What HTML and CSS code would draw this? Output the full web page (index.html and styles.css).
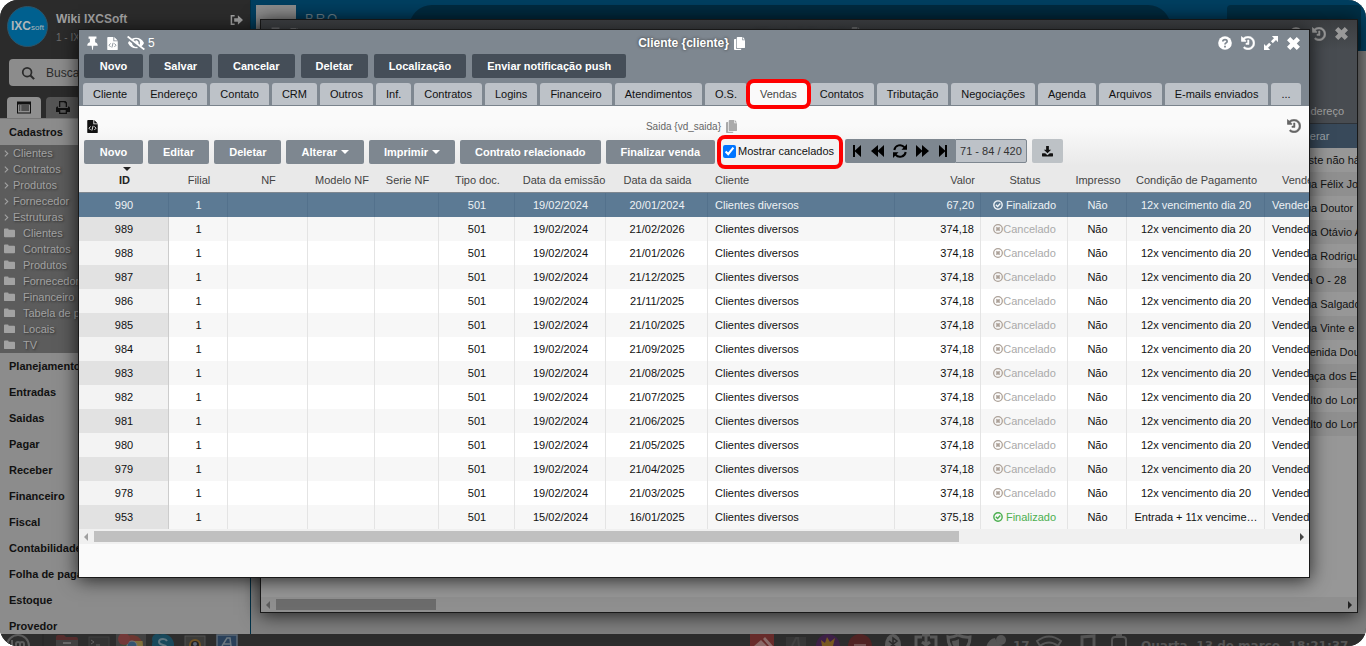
FILE: index.html
```html
<!DOCTYPE html>
<html lang="pt-BR">
<head>
<meta charset="utf-8">
<title>Cliente - Vendas</title>
<link rel="stylesheet" href="styles.css">
</head>
<body>
<svg class="sprite" aria-hidden="true">
  <symbol id="pin" viewBox="0 0 12 16"><path d="M1.500.5h9v2.500H9v4.200c2 .8 3 2 3 3.800H7L6.300 16h-.6L5 11H0c0-1.800 1-3 3-3.800V3H1.500z"/></symbol>
  <symbol id="code" viewBox="0 0 12 16"><path d="M1 1h6v5h5v9a1 1 0 0 1-1 1H1a1 1 0 0 1-1-1V2a1 1 0 0 1 1-1zM8 1l4 4H8z"/><path class="cut" d="M3.800 8.500 2 10.500l1.800 2M8.200 8.500l1.800 2-1.800 2M6.700 7.800 5.300 13.200"/></symbol>
  <symbol id="eye" viewBox="0 0 640 512"><path d="M320 400c-75.850 0-137.250-58.710-142.900-133.110L72.200 185.820c-13.790 17.300-26.480 35.590-36.720 55.590a32.350 32.350 0 0 0 0 29.190C89.710 376.410 197.070 448 320 448c26.910 0 52.870-4 77.890-10.460L346 397.390a144.130 144.130 0 0 1-26 2.610zm313.820 58.100l-110.550-85.440a331.250 331.250 0 0 0 81.250-102.070 32.350 32.350 0 0 0 0-29.190C550.290 135.590 442.930 64 320 64a308.150 308.150 0 0 0-147.320 37.700L45.460 3.370A16 16 0 0 0 23 6.180L3.370 31.450A16 16 0 0 0 6.180 53.900l588.360 454.730a16 16 0 0 0 22.460-2.810l19.640-25.270a16 16 0 0 0-2.820-22.450zm-183.720-142l-39.300-30.380A94.750 94.750 0 0 0 416 256a94.760 94.760 0 0 0-121.310-92.210A47.650 47.650 0 0 1 304 192a46.640 46.640 0 0 1-1.540 10l-73.610-56.890A142.310 142.310 0 0 1 320 112a143.920 143.920 0 0 1 144 144c0 21.630-5.290 41.790-13.900 60.110z"/></symbol>
  <symbol id="history" viewBox="0 0 512 512"><path stroke="currentColor" stroke-width="18" d="M504 255.531c.253 136.640-111.180 248.372-247.820 248.468-59.015.042-113.223-20.530-155.822-54.911-11.077-8.940-11.905-25.541-1.839-35.607l11.267-11.267c8.609-8.609 22.353-9.551 31.891-1.984C173.062 425.135 212.781 440 256 440c101.705 0 184-82.311 184-184 0-101.705-82.311-184-184-184-48.814 0-93.149 18.969-126.068 49.932l50.754 50.754c10.080 10.080 2.941 27.314-11.313 27.314H24c-8.837 0-16-7.163-16-16V38.627c0-14.254 17.234-21.393 27.314-11.314l49.372 49.372C129.209 34.136 189.552 8 256 8c136.810 0 247.747 110.780 248 247.531zM240 144h52v164h-112v-48h60z"/></symbol>
  <symbol id="help" viewBox="0 0 16 16"><circle cx="8" cy="8" r="7.800"/><path class="cut thick" d="M5.500 6.300C5.700 3.300 10.500 3.400 10.400 6.200 10.300 8 8 7.800 8 9.800M8 11v2"/></symbol>
  <symbol id="expand" viewBox="0 0 16 16"><path d="M9 0h7v7l-2.300-2.300-3.600 3.600-2.200-2.200 3.500-3.500zM0 9l2.300 2.300 3.600-3.600 2.200 2.200-3.500 3.500L7 16H0z"/></symbol>
  <symbol id="close" viewBox="0 0 14 14"><path d="M3.500 0 7 3.500 10.500 0 14 3.500 10.500 7l3.500 3.500-3.500 3.500L7 10.500 3.500 14 0 10.500 3.500 7 0 3.500z"/></symbol>
  <symbol id="copy" viewBox="0 0 12 14"><path d="M4 0h5v3.500h3V11a1 1 0 0 1-1 1H4a1 1 0 0 1-1-1V1a1 1 0 0 1 1-1zM9.700 0 12 2.700H9.700zM0 3a1 1 0 0 1 1-1h1.300v10.700H8V13a1 1 0 0 1-1 1H1a1 1 0 0 1-1-1z"/></symbol>
  <symbol id="search" viewBox="0 0 16 16"><g fill="none" stroke="currentColor" stroke-width="2"><circle cx="7" cy="7" r="5"/><path d="M10.500 10.500 15 15" stroke-width="2.400"/></g></symbol>
  <symbol id="exit" viewBox="0 0 14 12"><path d="M5 1.500H1.500v9H5" fill="none" stroke="currentColor" stroke-width="1.600"/><path d="M4.500 4.200h4V1L14 6l-5.500 5V7.800h-4z"/></symbol>
  <symbol id="list" viewBox="0 0 14 12"><path d="M0 0h14v12H0zM1 3v8h12V3z" fill-rule="evenodd"/><path d="M2 4h1.300v1H2zm2.300 0H12v1H4.300zM2 6h1.300v1H2zm2.300 0H12v1H4.300zM2 8h1.300v1H2zm2.300 0H12v1H4.300z"/></symbol>
  <symbol id="print" viewBox="0 0 14 13"><path d="M3 0h6.500L11 1.500V6H9.700V2.300H8.500V1.300H4.300V6H3zM1.500 5.500H2V7h10V5.500h.5A1.500 1.500 0 0 1 14 7v4h-3v2H3v-2H0V7a1.500 1.500 0 0 1 1.500-1.500zM4.300 9v2.700h5.400V9z" fill-rule="evenodd"/></symbol>
  <symbol id="folder" viewBox="0 0 12 10"><path d="M0 1a1 1 0 0 1 1-1h3a1 1 0 0 1 1 1v.5h6a1 1 0 0 1 1 1V8.500a1 1 0 0 1-1 1H1a1 1 0 0 1-1-1z"/></symbol>
  <symbol id="chev" viewBox="0 0 6 8"><path d="M1 .5 4.500 4 1 7.500" fill="none" stroke="currentColor" stroke-width="1.300"/></symbol>
  <symbol id="first" viewBox="0 0 10 12"><path d="M1 0h2v5.500L9 0v12L3 6.500V12H1z"/></symbol>
  <symbol id="back" viewBox="0 0 13 12"><path d="M7 0v5.500L13 0v12L7 6.500V12L0 6z"/></symbol>
  <symbol id="fwd" viewBox="0 0 13 12"><path d="M0 0l6 5.500V0l7 6-7 6V6.500L0 12z"/></symbol>
  <symbol id="last" viewBox="0 0 10 12"><path d="M9 0H7v5.500L1 0v12l6-5.500V12h2z"/></symbol>
  <symbol id="refresh" viewBox="0 0 14 14"><path d="M1.300 6A5.800 5.800 0 0 1 11.500 3.300M12.700 8A5.800 5.800 0 0 1 2.500 10.700" fill="none" stroke="currentColor" stroke-width="2"/><path d="M14 0v5.700H8.500zM0 14V8.300h5.500z"/></symbol>
  <symbol id="down" viewBox="0 0 12 12"><path d="M4.500 0h3v4H10L6 8 2 4h2.500zM.5 8h3L6 10.200 8.500 8h3A.5.5 0 0 1 12 8.500V11a.5.5 0 0 1-.5.500H.5A.5.5 0 0 1 0 11V8.500A.5.5 0 0 1 .5 8z"/></symbol>
  <symbol id="ok" viewBox="0 0 12 12"><g fill="none" stroke="currentColor" stroke-width="1.700"><circle cx="6" cy="6" r="5"/><path d="M3.500 5.700 5.500 7.700 8.800 4.300"/></g></symbol>
  <symbol id="no" viewBox="0 0 12 12"><g fill="none" stroke="currentColor" stroke-width="1.500"><circle cx="6" cy="6" r="5.200"/><path d="M4 4l4 4M8 4l-4 4" stroke-width="2"/></g></symbol>
</svg>

<div class="screen">
  <div class="app">
    <aside class="side">
      <header class="user">
        <div class="logo"><b>IXC</b>soft</div>
        <div class="who"><strong>Wiki IXCSoft</strong><span>1 - IXC</span></div>
        <svg class="exit"><use href="#exit"/></svg>
      </header>
      <div class="find"><svg><use href="#search"/></svg><input type="text" aria-label="Buscar" value="Buscar"></div>
      <div class="sidetabs">
        <button class="on" aria-label="Menu"><svg><use href="#list"/></svg></button>
        <button aria-label="Imprimir"><svg><use href="#print"/></svg></button>
      </div>
      <h2 class="group">Cadastros</h2>
      <ul class="tree">
        <li><svg class="chev"><use href="#chev"/></svg>Clientes</li>
        <li><svg class="chev"><use href="#chev"/></svg>Contratos</li>
        <li><svg class="chev"><use href="#chev"/></svg>Produtos</li>
        <li><svg class="chev"><use href="#chev"/></svg>Fornecedor</li>
        <li><svg class="chev"><use href="#chev"/></svg>Estruturas</li>
        <li><svg class="folder"><use href="#folder"/></svg>Clientes</li>
        <li><svg class="folder"><use href="#folder"/></svg>Contratos</li>
        <li><svg class="folder"><use href="#folder"/></svg>Produtos</li>
        <li><svg class="folder"><use href="#folder"/></svg>Fornecedor</li>
        <li><svg class="folder"><use href="#folder"/></svg>Financeiro</li>
        <li><svg class="folder"><use href="#folder"/></svg>Tabela de preço</li>
        <li><svg class="folder"><use href="#folder"/></svg>Locais</li>
        <li><svg class="folder"><use href="#folder"/></svg>TV</li>
      </ul>
      <h2 class="group">Planejamento</h2>
      <h2 class="group">Entradas</h2>
      <h2 class="group">Saidas</h2>
      <h2 class="group">Pagar</h2>
      <h2 class="group">Receber</h2>
      <h2 class="group">Financeiro</h2>
      <h2 class="group">Fiscal</h2>
      <h2 class="group">Contabilidade</h2>
      <h2 class="group">Folha de pagamento</h2>
      <h2 class="group">Estoque</h2>
      <h2 class="group">Provedor</h2>
    </aside>
    <main class="main">
      <div class="topbar">
        <div class="tile"></div><span class="brand">BRO —</span><div class="pill"></div><div class="box"></div>
      </div>
    </main>
  </div>

  <section class="win behind">
    <div class="bar">
      <div class="left"><svg class="pin"><use href="#pin"/></svg><svg class="code"><use href="#code"/></svg></div>
      <h1 class="title">Cliente {cliente}<svg class="copy"><use href="#copy"/></svg></h1>
      <div class="right"><svg class="i14"><use href="#help"/></svg><svg class="i14"><use href="#history"/></svg><svg class="x"><use href="#close"/></svg></div>
    </div>
    <ul class="streets">
      <li class="label">Endereço</li>
      <li class="sel">Alterar</li>
      <li>Teste não há</li>
      <li>Rua Félix João</li>
      <li>Rua Doutor</li>
      <li>Rua Otávio A</li>
      <li>Rua Rodrigues</li>
      <li>Via O - 28</li>
      <li>Rua Salgado</li>
      <li>Rua Vinte e</li>
      <li>Avenida Doutor</li>
      <li>Praça dos E</li>
      <li>Salto do Lontra</li>
      <li>Salto do Lontra</li>
    </ul>
    <div class="scroll dark"><i class="la"></i><div class="track"><div class="thumb"></div></div><i class="ra"></i></div>
  </section>

  <section class="win front">
    <div class="head">
      <div class="bar">
        <div class="left"><svg class="pin"><use href="#pin"/></svg><svg class="code"><use href="#code"/></svg><svg class="eye"><use href="#eye"/></svg><span>5</span></div>
        <h1 class="title">Cliente {cliente}<svg class="copy"><use href="#copy"/></svg></h1>
        <div class="right"><svg class="i14"><use href="#help"/></svg><svg class="i14"><use href="#history"/></svg><svg class="i14"><use href="#expand"/></svg><svg class="x"><use href="#close"/></svg></div>
      </div>
      <div class="actions">
        <button>Novo</button><button>Salvar</button><button>Cancelar</button><button>Deletar</button><button>Localização</button><button>Enviar notificação push</button>
      </div>
      <nav class="tabs">
        <button>Cliente</button><button>Endereço</button><button>Contato</button><button>CRM</button><button>Outros</button><button>Inf.</button><button>Contratos</button><button>Logins</button><button>Financeiro</button><button>Atendimentos</button><button>O.S.</button><button class="on mark">Vendas</button><button>Contatos</button><button>Tributação</button><button>Negociações</button><button>Agenda</button><button>Arquivos</button><button>E-mails enviados</button><button>...</button>
      </nav>
    </div>
    <div class="panel">
      <div class="sub">
        <svg class="code"><use href="#code"/></svg>
        <span class="subtitle">Saida {vd_saida}<svg class="copy"><use href="#copy"/></svg></span>
        <svg class="i14"><use href="#history"/></svg>
      </div>
      <div class="tools">
        <button>Novo</button><button>Editar</button><button>Deletar</button><button>Alterar<i class="caret"></i></button><button>Imprimir<i class="caret"></i></button><button>Contrato relacionado</button><button>Finalizar venda</button>
        <label class="check mark"><input type="checkbox" checked>Mostrar cancelados</label>
        <div class="pager">
          <div class="nav">
            <button aria-label="Primeira"><svg class="n10"><use href="#first"/></svg></button>
            <button aria-label="Anterior"><svg class="n13"><use href="#back"/></svg></button>
            <button aria-label="Atualizar"><svg class="n14"><use href="#refresh"/></svg></button>
            <button aria-label="Próxima"><svg class="n13"><use href="#fwd"/></svg></button>
            <button aria-label="Última"><svg class="n10"><use href="#last"/></svg></button>
          </div>
          <span class="count">71 - 84 / 420</span>
        </div>
        <button class="dl" aria-label="Baixar"><svg><use href="#down"/></svg></button>
      </div>
    </div>
    <div class="grid">
      <table>
        <colgroup><col class="w90"><col class="w59"><col class="w80"><col class="w67"><col class="w64"><col class="w76"><col class="w91"><col class="w102"><col class="w187"><col class="w86"><col class="w87"><col class="w59"><col class="w138"><col class="w80"></colgroup>
        <thead><tr><th class="sorted">ID</th><th>Filial</th><th>NF</th><th>Modelo NF</th><th>Serie NF</th><th>Tipo doc.</th><th>Data da emissão</th><th>Data da saida</th><th>Cliente</th><th>Valor</th><th>Status</th><th>Impresso</th><th>Condição de Pagamento</th><th>Vendedor</th></tr></thead>
        <tbody>
          <tr class="sel"><td>990</td><td>1</td><td></td><td></td><td></td><td>501</td><td>19/02/2024</td><td>20/01/2024</td><td>Clientes diversos</td><td>67,20</td><td class="ok"><svg><use href="#ok"/></svg> Finalizado</td><td>Não</td><td>12x vencimento dia 20</td><td>Vendedor</td></tr>
          <tr><td>989</td><td>1</td><td></td><td></td><td></td><td>501</td><td>19/02/2024</td><td>21/02/2026</td><td>Clientes diversos</td><td>374,18</td><td class="no"><svg><use href="#no"/></svg>Cancelado</td><td>Não</td><td>12x vencimento dia 20</td><td>Vendedor</td></tr>
          <tr><td>988</td><td>1</td><td></td><td></td><td></td><td>501</td><td>19/02/2024</td><td>21/01/2026</td><td>Clientes diversos</td><td>374,18</td><td class="no"><svg><use href="#no"/></svg>Cancelado</td><td>Não</td><td>12x vencimento dia 20</td><td>Vendedor</td></tr>
          <tr><td>987</td><td>1</td><td></td><td></td><td></td><td>501</td><td>19/02/2024</td><td>21/12/2025</td><td>Clientes diversos</td><td>374,18</td><td class="no"><svg><use href="#no"/></svg>Cancelado</td><td>Não</td><td>12x vencimento dia 20</td><td>Vendedor</td></tr>
          <tr><td>986</td><td>1</td><td></td><td></td><td></td><td>501</td><td>19/02/2024</td><td>21/11/2025</td><td>Clientes diversos</td><td>374,18</td><td class="no"><svg><use href="#no"/></svg>Cancelado</td><td>Não</td><td>12x vencimento dia 20</td><td>Vendedor</td></tr>
          <tr><td>985</td><td>1</td><td></td><td></td><td></td><td>501</td><td>19/02/2024</td><td>21/10/2025</td><td>Clientes diversos</td><td>374,18</td><td class="no"><svg><use href="#no"/></svg>Cancelado</td><td>Não</td><td>12x vencimento dia 20</td><td>Vendedor</td></tr>
          <tr><td>984</td><td>1</td><td></td><td></td><td></td><td>501</td><td>19/02/2024</td><td>21/09/2025</td><td>Clientes diversos</td><td>374,18</td><td class="no"><svg><use href="#no"/></svg>Cancelado</td><td>Não</td><td>12x vencimento dia 20</td><td>Vendedor</td></tr>
          <tr><td>983</td><td>1</td><td></td><td></td><td></td><td>501</td><td>19/02/2024</td><td>21/08/2025</td><td>Clientes diversos</td><td>374,18</td><td class="no"><svg><use href="#no"/></svg>Cancelado</td><td>Não</td><td>12x vencimento dia 20</td><td>Vendedor</td></tr>
          <tr><td>982</td><td>1</td><td></td><td></td><td></td><td>501</td><td>19/02/2024</td><td>21/07/2025</td><td>Clientes diversos</td><td>374,18</td><td class="no"><svg><use href="#no"/></svg>Cancelado</td><td>Não</td><td>12x vencimento dia 20</td><td>Vendedor</td></tr>
          <tr><td>981</td><td>1</td><td></td><td></td><td></td><td>501</td><td>19/02/2024</td><td>21/06/2025</td><td>Clientes diversos</td><td>374,18</td><td class="no"><svg><use href="#no"/></svg>Cancelado</td><td>Não</td><td>12x vencimento dia 20</td><td>Vendedor</td></tr>
          <tr><td>980</td><td>1</td><td></td><td></td><td></td><td>501</td><td>19/02/2024</td><td>21/05/2025</td><td>Clientes diversos</td><td>374,18</td><td class="no"><svg><use href="#no"/></svg>Cancelado</td><td>Não</td><td>12x vencimento dia 20</td><td>Vendedor</td></tr>
          <tr><td>979</td><td>1</td><td></td><td></td><td></td><td>501</td><td>19/02/2024</td><td>21/04/2025</td><td>Clientes diversos</td><td>374,18</td><td class="no"><svg><use href="#no"/></svg>Cancelado</td><td>Não</td><td>12x vencimento dia 20</td><td>Vendedor</td></tr>
          <tr><td>978</td><td>1</td><td></td><td></td><td></td><td>501</td><td>19/02/2024</td><td>21/03/2025</td><td>Clientes diversos</td><td>374,18</td><td class="no"><svg><use href="#no"/></svg>Cancelado</td><td>Não</td><td>12x vencimento dia 20</td><td>Vendedor</td></tr>
          <tr><td>953</td><td>1</td><td></td><td></td><td></td><td>501</td><td>15/02/2024</td><td>16/01/2025</td><td>Clientes diversos</td><td>375,18</td><td class="ok"><svg><use href="#ok"/></svg> Finalizado</td><td>Não</td><td>Entrada + 11x vencime…</td><td>Vendedor</td></tr>
        </tbody>
      </table>
    </div>
    <div class="scroll"><i class="la"></i><div class="track"><div class="thumb"></div></div><i class="ra"></i></div>
  </section>

  <footer class="taskbar">
    <svg class="apps" viewBox="0 0 240 12">
      <circle cx="18" cy="12" r="11" fill="#2d2d2d" stroke="#5c5c5c" stroke-width="2"/>
      <path d="M12 6v9h4M16 15v-5q0-2 2-2t2 2v5M20 10q0-2 2-2t2 2v5" fill="none" stroke="#5c5c5c" stroke-width="2"/>
      <path d="M43 0v12" stroke="#262626"/>
      <path d="M56 3q0-2 2-2h6l2 2h10q2 0 2 2v7H56z" fill="#542c2c"/><path d="M56 6h22v6H56z" fill="#414141"/><path d="M63 8h8v2h-8z" fill="#686868"/>
      <rect x="89" y="3" width="20" height="14" fill="#333" stroke="#414141"/><path d="M91 6l3 2-3 2M96 11h4" fill="none" stroke="#606060"/>
      <rect x="116" width="30" height="12" fill="#414141"/><circle cx="132" cy="12" r="11" fill="#3c4c3a"/><path d="M122.500 6.500A11 11 0 0 1 143 11h-11z" fill="#6d3630"/><path d="M134 7h8.500l.5 5h-7z" fill="#80703b"/><circle cx="132" cy="12" r="5" fill="#345470" stroke="#777"/><circle cx="124" cy="5" r="6" fill="#733838"/>
      <circle cx="163" cy="11" r="11" fill="#19495c"/><circle cx="157" cy="5" r="5" fill="#19495c"/><path d="M167 7q-1-2-4-2-4 0-4 3 0 2 4 3 4 1 4 3" fill="none" stroke="#5f7680" stroke-width="2"/>
      <rect x="185" y="2" width="20" height="12" fill="#3c3c3a" stroke="#515151"/><circle cx="195" cy="11" r="5" fill="#242424" stroke="#705325" stroke-width="2"/><circle cx="195" cy="10" r="2" fill="#596475"/>
      <rect x="217" y="1" width="20" height="14" fill="#29405a" stroke="#5b6877" stroke-width="1.500"/><path d="M222 12l5-8h3l1 8M224 10h6" fill="none" stroke="#6b7780" stroke-width="1.500"/>
    </svg>
    <svg class="tray" viewBox="0 0 380 12">
      <rect x="0" width="24" height="14" fill="#682c2b"/><path d="M4 12l7-6 6 6zM13 5l2-2 8 9h-4z" fill="#8b6b69"/>
      <rect x="36" y="3" width="20" height="12" fill="#373737"/><path d="M42 12l4-8h2l1 8" stroke="#424242" fill="none" stroke-width="2"/>
      <circle cx="78" cy="12" r="12" fill="#3e2147"/><path d="M72 12l-1-6 4 3 2-6 3 5 5-4-2 8z" fill="#775820"/>
      <circle cx="110" cy="12" r="12" fill="#512424"/><path d="M104 10h12v3h-12z" fill="#745353"/>
      <ellipse cx="143" cy="11" rx="8" ry="11" fill="#5b5b5b"/><path d="M139 7l8 7-4 3V4l4 3-7 6" fill="none" stroke="#2b2b2b" stroke-width="1.500"/>
      <path d="M172 3h-6v11M180 3h6v11M176 1v10M172 8l4 3 4-3M172 1h8" fill="none" stroke="#595959" stroke-width="3"/>
      <path d="M208 1q-6 3-10 2 0 12 11 16 11-4 11-16-5 1-12-2" fill="none" stroke="#5a5a5a" stroke-width="3"/><path d="M209 5v11q-7-3-7-9 4 0 7-2" fill="#555"/>
      <path d="M236 14q2-9 9-10 2 6 8 8v2z" fill="#555"/><circle cx="251" cy="6" r="5" fill="#555"/>
      <path d="M287 7q12-9 24 0l-3 5q-9-7-18 0z" fill="none" stroke="#555" stroke-width="2"/>
      <path d="M332 12V3l12-1v10" fill="none" stroke="#555" stroke-width="3"/>
      <rect x="362" y="3" width="14" height="12" rx="3" fill="none" stroke="#555" stroke-width="2"/><path d="M366 0h6v3h-6z" fill="#555"/>
      <text x="263" y="16" class="traytext">17</text>
    </svg>
    <span class="clock">Quarta, 13 de março, 18:21:37</span>
  </footer>
</div>
</body>
</html>
```
FILE: styles.css
```css
* { box-sizing: border-box; }
body { margin: 0; background: #fff; color: #111; font: 11px "Liberation Sans", Arial, sans-serif; }
button, input { font: inherit; color: inherit; border: 0; margin: 0; padding: 0; }
h1, h2, ul { margin: 0; padding: 0; font-size: inherit; list-style: none; }
svg { fill: currentColor; flex: none; display: block; overflow: visible; }
.sprite { position: absolute; width: 0; height: 0; }
.screen { position: relative; display: flex; flex-direction: column; height: 100vh; border-radius: 18px; overflow: hidden; background: #2d2d2d; }
.app { flex: 1; min-height: 0; display: flex; overflow: hidden; }

/* sidebar */
.side { width: 251px; flex: none; background: linear-gradient(#2b2b2b 118px, #8c8c8c 118px); border-right: 1px solid #003148; overflow: hidden; }
.user { display: flex; height: 59px; padding: 6px 7px 0; gap: 8px; color: #a0a0a0; }
.logo { width: 41px; height: 41px; border-radius: 50%; background: #00608f; border: 1px solid #2d5468; color: #aeb6ba; font-size: 8px; line-height: 39px; text-align: center; white-space: nowrap; }
.logo b { font-size: 12px; }
.who { flex: 1; display: flex; flex-direction: column; gap: 6px; padding-top: 6px; }
.who strong { font-size: 12px; line-height: 14px; }
.who span { font-size: 10px; line-height: 12px; color: #6c6c6c; }
.exit { width: 13px; height: 12px; margin-top: 8px; }
.find { display: flex; align-items: center; gap: 11px; height: 27px; margin-left: 9px; padding-left: 12px; background: #8c8c8c; border-radius: 4px; color: #2b2b2b; }
.find svg { width: 14px; height: 14px; }
.find input { background: none; flex: 1; min-width: 0; font-size: 12px; }
.sidetabs { display: flex; gap: 5px; height: 33px; padding: 11px 7px 0; border-bottom: 1px solid #777; }
.sidetabs button { display: grid; place-items: center; width: 34px; border-radius: 4px 4px 0 0; background: #555; color: #111; }
.sidetabs .on { background: #8f8f8f; }
.sidetabs svg { width: 14px; height: 13px; }
.group { height: 26px; padding-left: 9px; line-height: 27px; color: #111; background: #8c8c8c; white-space: nowrap; overflow: hidden; }
.tree { background: #5c5c5c; color: #a2a2a2; text-shadow: 1px 1px 2px #333; }
.tree li { display: flex; align-items: center; height: 16px; padding-left: 4px; white-space: nowrap; }
.chev { width: 5px; height: 7px; margin-right: 4px; }
.folder { width: 11px; height: 10px; margin-right: 8px; }

/* desktop */
.main { flex: 1; background: #7f7f7f; }
.topbar { display: flex; height: 51px; padding: 5px 5px 0; background: #003f60; }
.tile { width: 40px; background: #8d8d8d; }
.brand { width: 113px; padding: 6px 9px; font-size: 13px; letter-spacing: 2px; color: #71858f; }
.pill { flex: 1; border-radius: 24px; background: #002b40; }
.box { width: 134px; margin-left: 56px; border-radius: 4px; background: #002f45; }

/* windows */
.win { --cut: #7e8790; position: absolute; display: flex; flex-direction: column; border: 1px solid #191919; box-shadow: 0 2px 18px rgba(0, 0, 0, .75); overflow: hidden; }
.bar { display: grid; grid-template-columns: 1fr auto 1fr; align-items: center; height: 24px; padding: 2px 9px 0 8px; color: #fff; }
.left, .right { display: flex; align-items: center; gap: 9px; }
.left span { font-size: 12px; margin-left: -6px; }
.right { justify-content: flex-end; }
.title { display: flex; align-items: center; gap: 5px; padding-right: 4px; font-size: 12px; line-height: 14px; text-shadow: 0 0 3px #333; }
.pin, .code { width: 11px; height: 14px; }
.eye { width: 18px; height: 14px; }
.copy { width: 11px; height: 13px; }
.i14 { width: 14px; height: 14px; }
.x { width: 13px; height: 13px; }
.cut { fill: none; stroke: var(--cut); stroke-width: 1; }
.thick { stroke-width: 2; }

.behind { --cut: #484c51; left: 260px; top: 19px; right: 8px; bottom: 33px; background: #979797; }
.behind .bar { height: 30px; padding: 0 9px 3px; flex: none; background: linear-gradient(#3b3d40, #484c51); color: #999; }
.behind .title { opacity: .5; }
.behind .left { opacity: .5; }
.streets { flex: 1; display: flex; flex-direction: column; line-height: 24px; white-space: nowrap; }
.streets li { flex: 0 0 24px; padding-left: calc(100% - 60px); background: #979797; overflow: hidden; }
.streets li:nth-child(even) { background: #8f8f8f; }
.streets li.label { flex-basis: 74px; padding-top: 49px; background: #484c51; border-bottom: 1px solid #2f3338; color: #a0a0a0; }
.streets li.sel { background: #38495a; color: #9ba3aa; }

.front { left: 78px; top: 29px; right: 56px; bottom: 68px; background: #fafafa; }
.head { flex: none; background: #7e8790; border-bottom: 1px solid #7a838c; }
.actions { display: flex; gap: 6px; padding: 0 5px; }
.actions button, .tools > button { height: 24px; padding: 0 15px; border-radius: 2px; background: #454e58; color: #fff; font-weight: bold; white-space: nowrap; }
.actions button:first-child, .tools > button:first-child { min-width: 59px; }
.tabs { display: flex; gap: 3px; padding: 5px 4px 0; }
.tabs button { height: 22px; padding: 0 10px; border-radius: 3px 3px 0 0; background: #bdc2c8; color: #111; white-space: nowrap; }
.tabs .on { background: #fafafa; color: #444; }
.mark { position: relative; }
.mark::after { content: ""; position: absolute; z-index: 2; inset: -4px; border: 4px solid #f00; border-radius: 8px; pointer-events: none; }

.panel { flex: none; background: linear-gradient(#fafafa 20px, #e9e9e9); }
.sub { --cut: #fff; display: grid; grid-template-columns: 1fr auto 1fr; align-items: center; height: 33px; padding: 7px 8px 0; color: #111; }
.sub > .i14 { justify-self: end; color: #666; }
.subtitle { display: flex; align-items: center; gap: 5px; padding-right: 5px; font-size: 10px; color: #666; }
.subtitle .copy { color: #aaa; }
.tools { display: flex; align-items: flex-start; gap: 5px; height: 27px; padding: 0 5px; }
.tools > button { margin-top: 1px; background: #7e8790; }
.caret { display: inline-block; margin: 0 0 2px 4px; border: 4px solid transparent; border-top-color: currentColor; border-bottom: 0; }
.check { display: flex; align-items: center; gap: 2px; height: 26px; margin: 0 1px; padding: 0 5px 2px 2px; color: #111; white-space: nowrap; background: #f2f2f2; border-radius: 6px; }
.check input { width: 13px; height: 13px; }
.pager { display: flex; height: 24px; }
.nav { display: flex; align-items: center; gap: 9px; padding: 0 7px; background: #7e8790; border-radius: 2px 0 0 2px; }
.nav button { background: none; color: #000; }
.n10 { width: 10px; height: 12px; }
.n13 { width: 13px; height: 12px; }
.n14 { width: 14px; height: 14px; }
.count { padding: 0 4px; line-height: 23px; border: 1px solid #7e8790; border-radius: 0 2px 2px 0; background: #bdc2c8; color: #333; white-space: nowrap; }
.tools > .dl { margin-top: 0; background: #bdc2c6; color: #111; padding: 0 10px; }
.dl svg { width: 11px; height: 11px; }

.grid { flex: none; overflow: hidden; }
table { width: 1266px; table-layout: fixed; border-collapse: separate; border-spacing: 0; }
.w90 { width: 90px; } .w59 { width: 59px; } .w80 { width: 80px; } .w67 { width: 67px; } .w64 { width: 64px; }
.w76 { width: 76px; } .w91 { width: 91px; } .w102 { width: 102px; } .w187 { width: 187px; } .w86 { width: 86px; }
.w87 { width: 87px; } .w138 { width: 138px; }
th, td { height: 24px; padding: 0 0 0 1px; text-align: center; white-space: nowrap; }
th { position: relative; height: 27px; padding-top: 2px; background: #e9e9e9; border-bottom: 1px solid #7e8790; color: #444; font-weight: normal; }
th.sorted { font-weight: bold; color: #222; }
th.sorted::after { content: ""; position: absolute; left: 44px; top: 1px; border: 4px solid transparent; border-top-color: #222; border-bottom: 0; }
th:nth-child(7) { padding-left: 7px; }
td { border-right: 1px solid #e4e4e4; background: #fff; }
tr:nth-child(even) td { background: #f7f7f7; }
td:first-child { background: #f3f3f3; border-right-color: #ccc; }
tr:nth-child(even) td:first-child { background: #e2e2e2; }
td:last-child, td:nth-child(9), th:nth-child(9) { text-align: left; padding-left: 7px; }
td:nth-child(10), th:nth-child(10) { text-align: right; padding-right: 6px; }
td svg { display: inline-block; width: 10px; height: 10px; vertical-align: -1px; }
.ok { color: #4caf50; }
.no { color: #aaa; }
.no svg { color: #aca198; }
tr.sel td, tr.sel td:first-child { background: #5c7a94; border-color: #53718c; color: #eef2f5; }

.scroll { display: flex; flex: none; align-items: center; height: 15px; padding: 0 5px; background: #f0f0f0; }
.track { flex: 1; margin: 0 5px 0 6px; }
.thumb { width: 72%; height: 11px; background: #c0c0c0; }
.la, .ra { border: 4px solid transparent; border-right: 4px solid #a0a0a0; border-left: 0; }
.ra { border-left: 4px solid #444; border-right: 0; }
.dark { background: #8f8f8f; }
.dark .thumb { width: 15%; background: #6c6c6c; }
.dark .la { border-right-color: #5c5c5c; }
.dark .ra { border-left-color: #222; }

/* taskbar */
.taskbar { flex: none; display: flex; height: 12px; overflow: hidden; background: #2d2d2d; }
.apps { width: 240px; height: 12px; }
.tray { width: 380px; height: 12px; margin-left: auto; }
.clock { width: 236px; padding: 5px 0 0 11px; font: bold 12px/14px "DejaVu Sans", sans-serif; color: #555; white-space: nowrap; }
.traytext { font: bold 12px "DejaVu Sans", sans-serif; fill: #555; }
```
